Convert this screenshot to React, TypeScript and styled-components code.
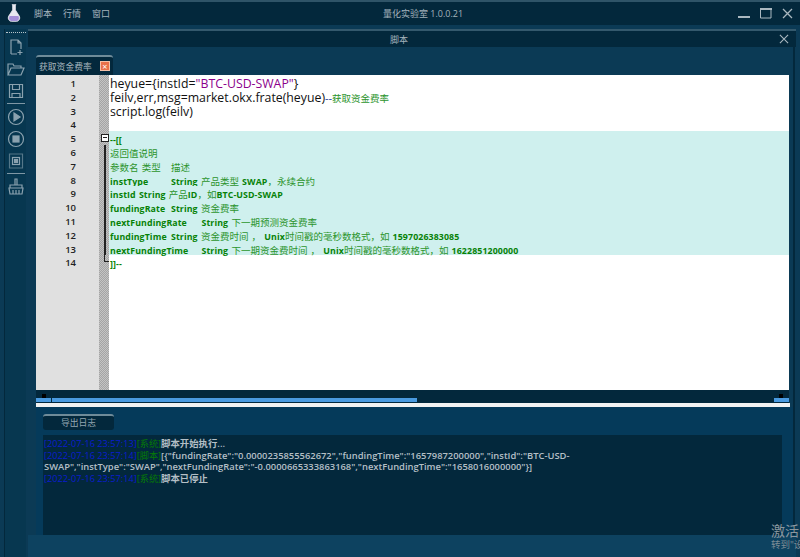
import React from "react";
import styled, { createGlobalStyle } from "styled-components";

const Global = createGlobalStyle`
  html, body { margin: 0; padding: 0; width: 800px; height: 557px; overflow: hidden; background: #0b3a55; }
  #root { width: 800px; height: 557px; }
  * { box-sizing: border-box; }
`;
const CJK = `"Noto Sans CJK SC", sans-serif`;

const Page = styled.div`
  position: relative; width: 800px; height: 557px; display: flex; flex-direction: column;
  background: #0b3a55; overflow: hidden; font-family: "Open Sans", ${CJK};
`;
const TitleBar = styled.header`
  height: 25px; flex: none; display: flex; align-items: center; padding-bottom: 1px;
  background: #03283c; border-top: 2px solid #2f5468; color: #a9b7bf; font-size: 9px;
`;
const Logo = styled.svg` width: 14px; height: 20px; margin-left: 7px; `;
const Menu = styled.nav` display: flex; gap: 11px; margin-left: 13px; `;
const MenuItem = styled.span` color: #a3b3bc; font-size: 9px; `;
const AppTitle = styled.div`
  flex: 1; text-align: center; font-size: 9px; color: #a3b3bc; padding-right: 2px;
`;
const WinBtns = styled.div` display: flex; align-items: center; gap: 10px; margin-right: 7px; padding-top: 1px; `;
const Body = styled.div` flex: 1; display: flex; min-height: 0; padding: 4px 4px 0 4px; `;
const Toolbar = styled.aside`
  width: 22px; flex: none; background: #073750; display: flex; flex-direction: column; align-items: center;
  padding-top: 3px; border-left: 1px solid #03283c;
`;
const Dots = styled.div` width: 20px; border-top: 1px dotted #b8c4cb; margin-bottom: 5px; `;
const ToolBtn = styled.svg` width: 18px; height: 18px; flex: none; margin-bottom: 4px; fill: none; stroke: #8ba2af; stroke-width: 1.2; `;
const ToolSep = styled.div` width: 18px; height: 1px; flex: none; background: #7f97a5; margin: -1px 0 4px; `;
const Window = styled.main` flex: 1; min-width: 0; display: flex; flex-direction: column; margin-left: 2px; `;
const WinBar = styled.div`
  height: 18px; flex: none; display: flex; align-items: center; justify-content: center; position: relative;
  background: #03283c; border-top: 2px solid #34596d; color: #a3b3bc; font-size: 9px; padding-right: 26px;
`;
const WinClose = styled.svg` position: absolute; right: 7px; top: 3px; width: 10px; height: 10px; `;
const Panel = styled.div`
  flex: 1; min-height: 0; display: flex; flex-direction: column; padding: 8px 0 0 8px;
  border-right: 2px solid #03283c; margin-right: 1px;
`;
const Tab = styled.div`
  width: 77px; height: 20px; display: flex; align-items: center; gap: 8px; padding-left: 3px; flex: none;
  background: #03283c; border-top: 2px solid #6f8b99; border-radius: 3px 3px 0 0;
  color: #a8b6be; font-size: 8.8px;
`;
const TabClose = styled.span`
  width: 10px; height: 10px; flex: none; background: #e8704a; border: 1px solid #f3c0a8; display: flex; align-items: center; justify-content: center;
  color: #fff; font-size: 9px; line-height: 1;
`;
const Editor = styled.section`
  width: 753px; height: 315px; flex: none; background: #fff; display: flex; position: relative;
`;
const Lines = styled.div` width: 100%; display: flex; flex-direction: column; position: relative; padding-top: 1px; `;
const GutterBg = styled.div`
  position: absolute; left: 0; top: 0; bottom: 0; width: 63px; background: #e0e0e0;
`;
const MarginBg = styled.div`
  position: absolute; left: 63px; top: 0; bottom: 0; width: 10px;
  background: repeating-conic-gradient(#a4a4a4 0 25%, #c4c4c4 0 50%) 0 0 / 2px 2px;
`;
const Row = styled.div`
  height: 13.8px; display: flex; position: relative; flex: none;
`;
const Num = styled.span`
  width: 63px; flex: none; text-align: right; padding: 1px 23px 0 0; font-family: "Open Sans", sans-serif; font-size: 9.5px; font-weight: 600;
  line-height: 13.8px; color: #222;
`;
const Fold = styled.span` width: 10px; flex: none; position: relative; `;
const FoldBox = styled.span`
  position: absolute; left: 2px; top: 3px; width: 8px; height: 8px; background: #fff; border: 1px solid #222; z-index: 2;
  &::after { content: ""; position: absolute; left: 1px; right: 1px; top: 2px; height: 1px; background: #222; }
`;
const FoldLine = styled.span`
  position: absolute; left: 5px; top: 0; bottom: 0; width: 1.5px; background: #222;
`;
const FoldEnd = styled.span`
  position: absolute; left: 5px; top: 0; height: 7px; width: 5px; border-left: 1.5px solid #222; border-bottom: 1.5px solid #222;
`;
const Code = styled.span<{ $hl?: boolean }>`
  flex: 1; padding: 1px 0 0 1px; background: ${(p) => (p.$hl ? "#cff0ee" : "transparent")};
  font-family: "Open Sans", ${CJK}; font-size: 12.3px; line-height: 13.8px; white-space: pre; tab-size: 30.5px; color: #111; height: 13.8px;
`;
const Cmt = styled.span`
  font-family: "Open Sans", ${CJK}; font-size: 8.8px; color: #078207; font-weight: 700; letter-spacing: 0.1px; word-spacing: 0.8px;
`;
const CmtCn = styled.span`
  font-family: ${CJK}; font-size: 9.5px; font-weight: 400; letter-spacing: 0; color: #2c942c;
`;
const Str = styled.span` color: #8b008b; `;
const Op = styled.span` color: #1c3f9a; font-size: 11px; `;
const HScroll = styled.div`
  width: 753px; height: 13px; flex: none; position: relative; background: #03283c;
`;
const Thumb = styled.div`
  position: absolute; left: 16px; width: 365px; bottom: 1px; height: 4px; background: #4a9ae0;
`;
const ScrollEnd = styled.div<{ $right?: boolean }>`
  position: absolute; bottom: 1px; height: 4px; width: 15px; background: #4a9ae0;
  ${(p) => (p.$right ? "right: 0;" : "left: 0;")}
  &::before { content: ""; position: absolute; ${(p) => (p.$right ? "right: 6px;" : "left: 6px;")} top: -4px; width: 4px; height: 4px; background: #000; }
`;
const Splitter = styled.div` width: 754px; height: 4px; flex: none; background: #f2f2f2; `;
const Lower = styled.div` flex: 1; display: flex; flex-direction: column; padding: 7px 0 0 7px; min-height: 0; background: #053a5a; `;
const ExportBtn = styled.button`
  width: 71px; height: 16px; flex: none; background: #03283c; border: 0; border-top: 2px solid #6f8b99; border-radius: 3px;
  color: #93a6b1; font-family: ${CJK}; font-size: 8.8px; padding: 0; line-height: 12px;
`;
const Log = styled.div`
  width: 739px; height: 101px; margin-top: 5px; flex: none; background: #03283c; padding: 3px 1px 0 1px;
  font-family: "Open Sans", ${CJK}; font-size: 9.38px; font-weight: 600; line-height: 11.7px; color: #b4bfc6; word-break: break-all;
`;
const LogLine = styled.div``;
const Time = styled.span` color: #0a1ccf; font-weight: 400; font-size: 9.2px; `;
const Tag = styled.span` color: #067a06; font-weight: 400; font-size: 9.2px; `;
const Footer = styled.div` height: 22px; flex: none; background: #0d4260; `;
const Watermark = styled.div`
  position: absolute; left: 771px; top: 522px; color: #8b98a0; font-size: 14px; line-height: 17px; white-space: nowrap;
`;
const WatermarkSub = styled.div` font-size: 9.5px; line-height: 12px; color: #7e8c95; `;

const ToolIcons = () => (
  <>
    <ToolBtn viewBox="0 0 18 18"><path d="M4 16V2h7l3 3v6M11 2v3h3M4 16h6M13 12v5M10.500 14.500h5" /></ToolBtn>
    <ToolBtn viewBox="0 0 18 18"><path d="M1 15V4h5l1 2h7v2M1 15l3-7h13l-3 7z" /></ToolBtn>
    <ToolBtn viewBox="0 0 18 18"><path d="M2.500 2.500h13v13h-13zM5.500 2.500v5h7v-5M5 15.500v-4h8v4" /></ToolBtn>
    <ToolSep />
    <ToolBtn viewBox="0 0 18 18"><circle cx="9" cy="9" r="7.500" /><path d="M7 5l6 4-6 4z" fill="#8ba2af" /></ToolBtn>
    <ToolBtn viewBox="0 0 18 18"><circle cx="9" cy="9" r="7.500" /><rect x="6" y="6" width="6" height="6" fill="#8ba2af" /></ToolBtn>
    <ToolBtn viewBox="0 0 18 18"><path d="M2.500 2v14h13V2z" opacity=".6" /><rect x="5.500" y="5.500" width="7" height="7" /><rect x="7.500" y="7.500" width="3" height="3" fill="#8ba2af" /></ToolBtn>
    <ToolSep />
    <ToolBtn viewBox="0 0 18 18"><path d="M8 1h2v6H8zM3 7h12v3H3zM2 10h14l-1 6H3zM6 12v4M9 12v4M12 12v4" /></ToolBtn>
  </>
);

const Cross = ({ c = "#aab8c0" }: { c?: string }) => (
  <svg width="11" height="11" viewBox="0 0 11 11"><path d="M1 1l9 9M10 1l-9 9" stroke={c} strokeWidth="1.300" /></svg>
);

const numbers = Array.from({ length: 14 }, (_, i) => i + 1);

const Comment = ({ text }: { text: string }) => (
  <Cmt>
    {text.split(/([\u3000-\u9fff\uff00-\uffef]+)/).map((part, i) =>
      i % 2 ? <CmtCn key={i}>{part}</CmtCn> : part
    )}
  </Cmt>
);

export default function App() {
  const code: React.ReactNode[] = [
    <>heyue={"{"}instId=<Str>"BTC-USD-SWAP"</Str>{"}"}</>,
    <>feilv,err,msg=market.okx.frate(heyue)<Op>--</Op><CmtCn>获取资金费率</CmtCn></>,
    <>script.log(feilv)</>,
    <></>,
    <Comment text="--[[" />,
    <Comment text="返回值说明" />,
    <Comment text={"参数名 类型\t描述"} />,
    <Comment text={"instType\tString 产品类型 SWAP，永续合约"} />,
    <Comment text="instId String 产品ID，如BTC-USD-SWAP" />,
    <Comment text={"fundingRate\tString 资金费率"} />,
    <Comment text={"nextFundingRate\tString 下一期预测资金费率"} />,
    <Comment text={"fundingTime\tString 资金费时间 ， Unix时间戳的毫秒数格式，如 1597026383085"} />,
    <Comment text={"nextFundingTime\tString 下一期资金费时间 ， Unix时间戳的毫秒数格式，如 1622851200000"} />,
    <Comment text="]]--" />,
  ];
  return (
    <Page>
      <Global />
      <TitleBar>
        <Logo viewBox="0 0 16 21">
          <path d="M5.500 1h5M6.500 1v6L2 14c-1.500 3 .5 6 3 6h6c2.500 0 4.500-3 3-6L9.500 7V1" fill="#e8e8f0" stroke="#e8e8f0" />
          <path d="M3 14h10c1.500 3 0 5.500-2 5.500H5C3 19.500 1.500 17 3 14z" fill="#a58fd8" />
        </Logo>
        <Menu><MenuItem>脚本</MenuItem><MenuItem>行情</MenuItem><MenuItem>窗口</MenuItem></Menu>
        <AppTitle>量化实验室 1.0.0.21</AppTitle>
        <WinBtns>
          <svg width="12" height="11" viewBox="0 0 12 11"><rect x="0" y="8" width="12" height="2" fill="#aab8c0" /></svg>
          <svg width="12" height="11" viewBox="0 0 12 11"><path d="M.5 1h10.500v9H.5z" fill="none" stroke="#aab8c0" /><rect x="0" y="0" width="12" height="2" fill="#aab8c0" /></svg>
          <Cross />
        </WinBtns>
      </TitleBar>
      <Body>
        <Toolbar><Dots /><ToolIcons /></Toolbar>
        <Window>
          <WinBar>脚本<WinClose viewBox="0 0 11 11"><path d="M1 1l9 9M10 1l-9 9" stroke="#aab8c0" strokeWidth="1.200" /></WinClose></WinBar>
          <Panel>
            <Tab>获取资金费率<TabClose>×</TabClose></Tab>
            <Editor>
              <Lines>
                <GutterBg /><MarginBg />
                {numbers.map((n, i) => (
                  <Row key={n}>
                    <Num>{n}</Num>
                    <Fold>
                      {n === 5 && <FoldBox />}
                      {n > 5 && n < 14 && <FoldLine />}
                      {n === 14 && <FoldEnd />}
                    </Fold>
                    <Code $hl={n >= 5 && n <= 13}>{code[i]}</Code>
                  </Row>
                ))}
              </Lines>
            </Editor>
            <HScroll><Thumb /><ScrollEnd /><ScrollEnd $right /></HScroll>
            <Splitter />
            <Lower>
              <ExportBtn>导出日志</ExportBtn>
              <Log>
                <LogLine><Time>[2022-07-16 23:57:13]</Time><Tag>[系统]</Tag>脚本开始执行...</LogLine>
                <LogLine><Time>[2022-07-16 23:57:14]</Time><Tag>[脚本]</Tag>[{'{"fundingRate":"0.0000235855562672","fundingTime":"1657987200000","instId":"BTC-USD-'}<br />{'SWAP","instType":"SWAP","nextFundingRate":"-0.0000665333863168","nextFundingTime":"1658016000000"}'}]</LogLine>
                <LogLine><Time>[2022-07-16 23:57:14]</Time><Tag>[系统]</Tag>脚本已停止</LogLine>
              </Log>
            </Lower>
          </Panel>
          <Footer />
        </Window>
      </Body>
      <Watermark>激活<WatermarkSub>转到"设置"</WatermarkSub></Watermark>
    </Page>
  );
}
